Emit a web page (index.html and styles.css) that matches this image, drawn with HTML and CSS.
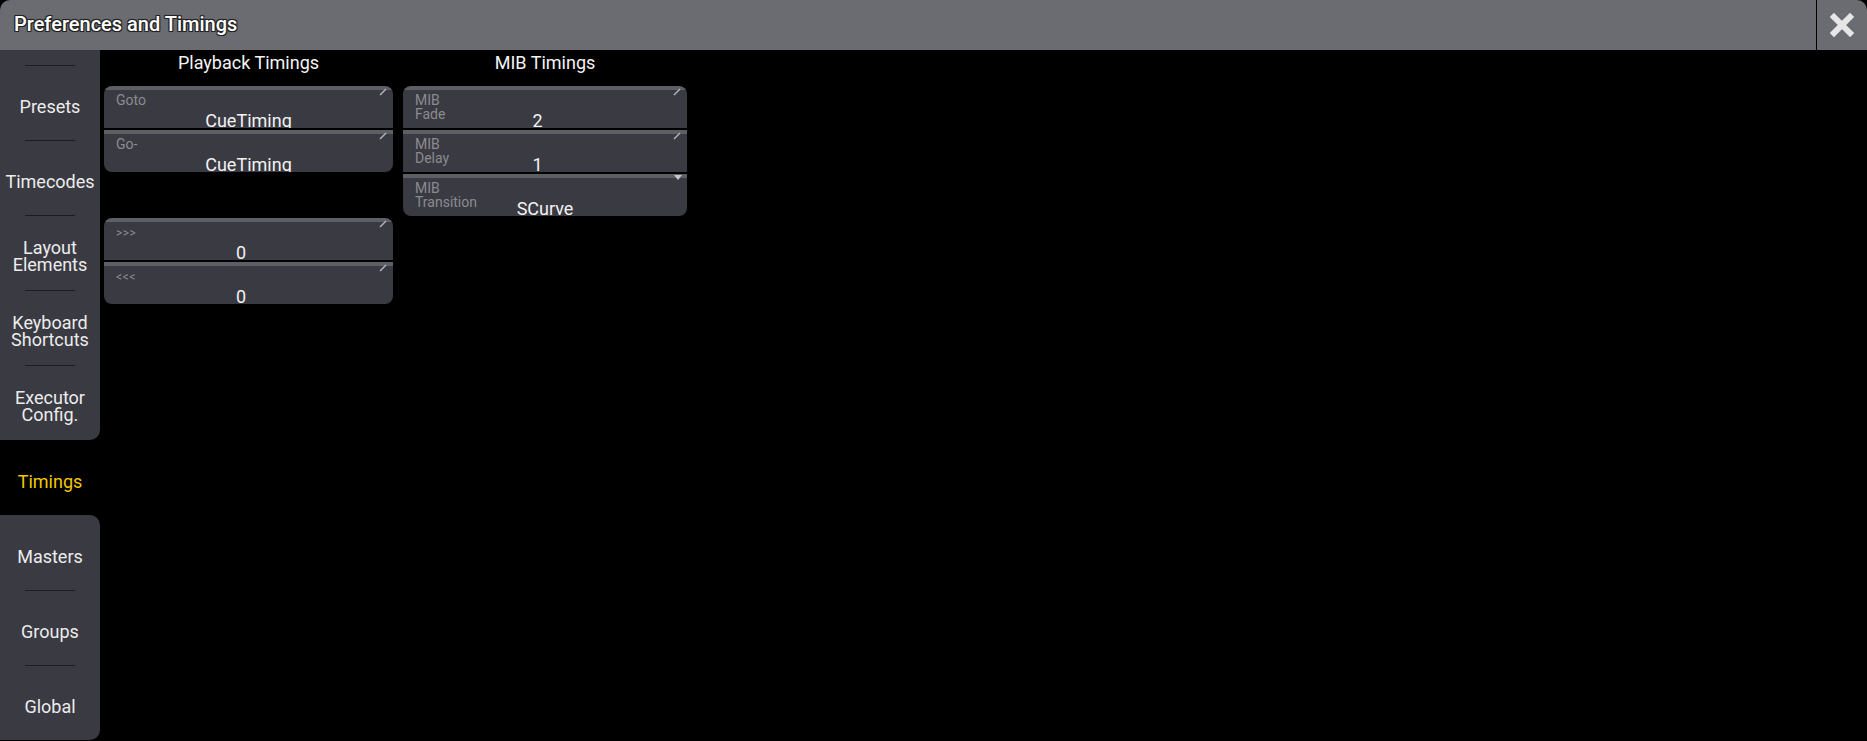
FILE: index.html
```html
<!DOCTYPE html>
<html>
<head>
<meta charset="utf-8">
<title>Preferences and Timings</title>
<link rel="stylesheet" href="styles.css">
</head>
<body>
<div class="window">
  <div class="titlebar">
    <div class="title">Preferences and Timings</div>
    <div class="close">
      <svg width="24" height="24" viewBox="0 0 24 24"><path d="M4 4 L20 20 M20 4 L4 20" stroke="#e6e6e6" stroke-width="6" stroke-linecap="square" fill="none"/></svg>
    </div>
  </div>
  <div class="main">
    <div class="sidebar">
      <div class="group group-top">
        <div class="item sep">Presets</div>
        <div class="item sep">Timecodes</div>
        <div class="item sep">Layout<br>Elements</div>
        <div class="item sep">Keyboard<br>Shortcuts</div>
        <div class="item sep">Executor<br>Config.</div>
      </div>
      <div class="item active">Timings</div>
      <div class="group group-bottom">
        <div class="item">Masters</div>
        <div class="item sep">Groups</div>
        <div class="item sep">Global</div>
      </div>
    </div>
    <div class="content">
      <div class="column col-playback">
        <div class="header">Playback Timings</div>
        <div class="panel">
          <div class="cell"><div class="label">Goto</div><div class="value">CueTiming</div><svg class="edit" width="8" height="8" viewBox="0 0 8 8"><path d="M1 7 L7 1" stroke="#b4b4b8" stroke-width="1.4"/></svg></div>
          <div class="cell"><div class="label">Go-</div><div class="value">CueTiming</div><svg class="edit" width="8" height="8" viewBox="0 0 8 8"><path d="M1 7 L7 1" stroke="#b4b4b8" stroke-width="1.4"/></svg></div>
        </div>
        <div class="spacer"></div>
        <div class="panel">
          <div class="cell"><div class="label small">&gt;&gt;&gt;</div><div class="value num">0</div><svg class="edit" width="8" height="8" viewBox="0 0 8 8"><path d="M1 7 L7 1" stroke="#b4b4b8" stroke-width="1.4"/></svg></div>
          <div class="cell"><div class="label small">&lt;&lt;&lt;</div><div class="value num">0</div><svg class="edit" width="8" height="8" viewBox="0 0 8 8"><path d="M1 7 L7 1" stroke="#b4b4b8" stroke-width="1.4"/></svg></div>
        </div>
      </div>
      <div class="column col-mib">
        <div class="header">MIB Timings</div>
        <div class="panel">
          <div class="cell"><div class="label">MIB<br>Fade</div><div class="value num">2</div><svg class="edit" width="8" height="8" viewBox="0 0 8 8"><path d="M1 7 L7 1" stroke="#b4b4b8" stroke-width="1.4"/></svg></div>
          <div class="cell"><div class="label">MIB<br>Delay</div><div class="value num">1</div><svg class="edit" width="8" height="8" viewBox="0 0 8 8"><path d="M1 7 L7 1" stroke="#b4b4b8" stroke-width="1.4"/></svg></div>
          <div class="cell"><div class="label">MIB<br>Transition</div><div class="value">SCurve</div><svg class="drop" width="8" height="7" viewBox="0 0 8 7"><path d="M0 1 L8 1 L4 6 Z" fill="#c8c8cc"/></svg></div>
        </div>
      </div>
    </div>
  </div>
</div>
</body>
</html>
```

FILE: styles.css
```css
* { box-sizing: border-box; }
html, body {
  margin: 0;
  padding: 0;
  background: #000;
  font-family: Roboto, "Liberation Sans", sans-serif;
  color: #ececec;
}
.window {
  width: 1867px;
  height: 741px;
  display: flex;
  flex-direction: column;
  overflow: hidden;
}
.titlebar {
  height: 50px;
  flex: 0 0 50px;
  background: #6b6c71;
  border-radius: 10px 10px 0 0;
  display: flex;
  align-items: stretch;
}
.title {
  flex: 1;
  padding-left: 14px;
  font-size: 20px;
  font-weight: 500;
  line-height: 48px;
  color: #fff;
  text-shadow: -1px -1px 0 #222, 1px -1px 0 #222, -1px 1px 0 #222, 1px 1px 0 #222, 0 0 2px #111;
}
.close {
  width: 51px;
  border-left: 1px solid #000;
  display: flex;
  align-items: center;
  justify-content: center;
}
.main {
  flex: 1;
  display: flex;
  min-height: 0;
}
.sidebar {
  width: 100px;
  flex: 0 0 100px;
  display: flex;
  flex-direction: column;
}
.group {
  background: #3a3a42;
  display: flex;
  flex-direction: column;
}
.group-top {
  padding-top: 15px;
  border-bottom-right-radius: 10px;
}
.group-bottom {
  border-top-right-radius: 10px;
  border-bottom-right-radius: 10px;
}
.item {
  height: 75px;
  flex: 0 0 75px;
  display: flex;
  align-items: center;
  justify-content: center;
  text-align: center;
  padding-top: 7px;
  font-size: 18px;
  line-height: 17px;
  color: #ececec;
  position: relative;
  white-space: nowrap;
}
.item.sep::before {
  content: "";
  position: absolute;
  top: 0;
  left: 25px;
  width: 50px;
  height: 1px;
  background: #1c1c20;
}
.item.active {
  color: #f2c800;
  background: #000;
}
.content {
  flex: 1;
  display: flex;
  gap: 10px;
  padding-left: 4px;
  align-items: flex-start;
}
.column {
  display: flex;
  flex-direction: column;
}
.col-playback { width: 289px; }
.col-mib { width: 284px; }
.header {
  height: 26px;
  line-height: 26px;
  text-align: center;
  font-size: 18px;
  color: #f4f4f4;
  margin-bottom: 10px;
}
.panel {
  display: flex;
  flex-direction: column;
  gap: 2px;
  border-radius: 8px;
  overflow: hidden;
}
.spacer { height: 46px; }
.cell {
  height: 42px;
  padding-top: 4px;
  background: linear-gradient(#5e5e65 0 4px, #3a3a42 4px 100%);
  display: grid;
  position: relative;
  overflow: hidden;
}
.label, .value {
  grid-area: 1 / 1;
}
.label {
  align-self: start;
  justify-self: start;
  padding: 3px 0 0 12px;
  font-size: 14px;
  line-height: 14px;
  color: #8b8b90;
}
.label.small { font-size: 12px; padding-top: 4px; letter-spacing: 0.5px; }
.value {
  align-self: start;
  justify-self: center;
  padding-top: 21px;
  font-size: 18px;
  line-height: 20px;
  color: #f2f2f2;
}
.value.num { padding-right: 15px; }
.edit {
  position: absolute;
  top: 2px;
  right: 6px;
}
.drop {
  position: absolute;
  top: 0;
  right: 5px;
}
```
